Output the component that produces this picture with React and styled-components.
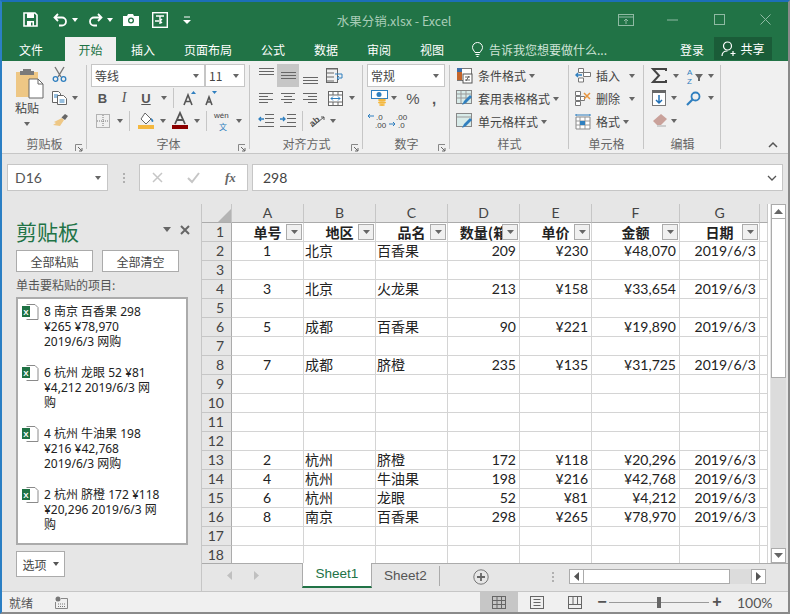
import React from "react";
import styled, { createGlobalStyle } from "styled-components";

const GlobalStyle = createGlobalStyle`
  html, body { margin: 0; padding: 0; overflow: hidden; }
  body { font-family: "Noto Sans CJK SC", "Liberation Sans", sans-serif; font-size: 12px; color: #444; }
  * { box-sizing: border-box; }
  svg { overflow: visible; }
`;

const CELL = `Lato, "Noto Sans CJK SC", sans-serif`;

const Window = styled.div`
  width: 790px; height: 614px; display: flex; flex-direction: column;
  border-top: 2px solid #1c6fb8; border-left: 2px solid #2b7fc4; border-right: 2px solid #8a8a8a; border-bottom: 2px solid #8a8a8a;
  background: #e6e6e6; overflow: hidden;
`;
const TitleBar = styled.div`
  height: 35px; background: #217346; display: flex; align-items: center; flex: none; color: #fff;
`;
const Qat = styled.div`display: flex; align-items: center; padding-left: 21px; width: 294px; flex: none;`;
const QatBtn = styled.div`width: ${p => p.$w}px; display: flex; align-items: center; gap: 4px;`;
const TitleText = styled.div`
  width: 196px; flex: none; text-align: center; color: #a9cdb8; font-size: 12.5px; padding-top: 1px;
`;
const WinControls = styled.div`
  display: flex; align-items: center; margin-left: 111px; gap: 0;
`;
const WinBtn = styled.div`width: 46.5px; display: flex; justify-content: center;`;

const TabBar = styled.div`
  height: 24px; background: #217346; display: flex; align-items: stretch; flex: none; padding-left: 17px; color: #fff; font-size: 12px;
`;
const Tab = styled.div`
  width: ${p => p.$w}px; margin-right: ${p => p.$mr || 0}px; display: flex; align-items: center; justify-content: center; padding-top: 1px;
  ${p => p.$active && `background: #f0f0f0; color: #217346;`}
`;
const TellMe = styled.div`
  display: flex; align-items: center; gap: 6px; margin-left: 28px; width: 208px; color: #cfe3d7; padding-top: 1px;
`;
const SignIn = styled.div`display: flex; align-items: center; width: 34px; flex: none; padding-top: 1px;`;
const ShareBtn = styled.div`
  width: 58px; height: 23px; background: #1a5c38; display: flex; align-items: center; justify-content: center; gap: 3px; margin-top: 0;
`;

const Ribbon = styled.div`
  height: 93px; background: #f0f0f0; display: flex; flex: none; border-bottom: 1px solid #c6c6c6; padding-top: 2px; position: relative;
`;
const Group = styled.div`
  width: ${p => p.$w}px; flex: none; display: flex; flex-direction: column; position: relative;
  ${p => !p.$last && `&::after { content: ""; position: absolute; right: 0; top: 2px; bottom: 4px; width: 1px; background: #c6c6c6; }`}
`;
const GroupBody = styled.div`
  height: 72px; flex: none; padding: ${p => p.$pad || "1px 4px 0"}; display: flex; flex-direction: ${p => p.$row ? "row" : "column"}; gap: ${p => p.$gap ?? 0}px;
`;
const GroupLabel = styled.div`
  flex: 1; display: flex; align-items: center; justify-content: center; font-size: 12px; color: #666; position: relative; padding-bottom: 5px;
`;
const Launcher = styled.svg`position: absolute; right: 4px; bottom: 5px;`;
const ToolRow = styled.div`
  height: ${p => p.$h || 22.5}px; display: flex; align-items: center; padding-left: ${p => p.$pl || 0}px;
`;
const Tool = styled.div`
  width: ${p => p.$w}px; flex: none; height: 100%; display: flex; align-items: center; justify-content: center; gap: 3px;
  ${p => p.$on && `background: #c6c6c6;`}
`;
const ToolSep = styled.div`width: 1px; height: 20px; background: #c6c6c6; flex: none; margin: 0 ${p => p.$m || 0}px;`;
const Caret = styled.span`
  display: inline-block; flex: none; width: 0; height: 0; border-left: 3.5px solid transparent; border-right: 3.5px solid transparent; border-top: 4px solid ${p => p.$c || "#666"};
`;
const BigCaret = styled(Caret)`border-left-width: 4.5px; border-right-width: 4.5px; border-top-width: 5px;`;
const PasteCaret = styled(Caret)`margin-left: 9px;`;
const SideCaret = styled(Caret)`margin-left: ${p => p.$ml || 5}px;`;
const ComboBox = styled.div`
  height: 23px; width: ${p => p.$w}px; background: #fff; border: 1px solid #c6c6c6; display: flex; align-items: center; justify-content: space-between;
  padding: 0 5px 0 3px; font-size: 12px; color: #444; margin-right: ${p => p.$mr || 0}px; flex: none;
`;
const PasteCol = styled.div`width: 47px; padding: 5px 0 0 13px; display: flex; flex-direction: column; align-items: flex-start; flex: none;`;
const PasteText = styled.div`font-size: 12px; color: #444; margin: 0 0 6px;`;
const SideCol = styled.div`display: flex; flex-direction: column; width: 30px; padding-left: 3px; flex: none;`;
const LabelTool = styled.div`
  height: 23px; display: flex; align-items: center; gap: 3px; color: #444; font-size: 12px; flex: none;
`;
const LabelSvg = styled.span`width: ${p => p.$w || 22}px; display: flex; justify-content: center; flex: none;`;
const CollapseCol = styled.div`flex: 1; display: flex; justify-content: flex-end; align-items: flex-end; padding: 0 10px 5px 0;`;

const FormulaBar = styled.div`
  height: 50px; flex: none; display: flex; align-items: flex-start; padding: 10px 5px 0 5px;
`;
const NameBox = styled.div`
  width: 101px; height: 27px; background: #fff; border: 1px solid #c6c6c6; display: flex; align-items: center; justify-content: space-between;
  padding: 0 6px 0 7px; font: 14px ${CELL}; color: #555; flex: none;
`;
const Grip = styled.div`
  width: 31px; height: 27px; flex: none; display: flex; flex-direction: column; gap: 2px; align-items: center; justify-content: center;
  & > i { width: 2px; height: 2px; background: #b0b0b0; display: block; }
`;
const FxBox = styled.div`
  width: 109px; height: 27px; background: #fff; border: 1px solid #c6c6c6; display: flex; align-items: center; flex: none; padding-left: 12px; gap: 24px;
`;
const FxText = styled.span`font: italic 600 13px "Liberation Serif", serif; color: #666; margin-left: 1px;`;
const FormulaInput = styled.div`
  flex: 1; height: 27px; background: #fff; border: 1px solid #c6c6c6; margin-left: 4px; display: flex; align-items: center; justify-content: space-between;
  padding: 0 5px 0 10px; font: 14px ${CELL}; color: #444;
`;

const Main = styled.div`flex: 1; display: flex; min-height: 0;`;
const Pane = styled.div`
  width: 199px; flex: none; padding: 9px 11px 0 14px; display: flex; flex-direction: column;
`;
const PaneHead = styled.div`height: 36px; display: flex; align-items: center; justify-content: space-between; flex: none;`;
const PaneTitle = styled.div`font-size: 21px; color: #217346; line-height: 1;`;
const PaneIcons = styled.div`display: flex; align-items: center; gap: 9px; margin: -3px 0 0;`;
const PaneBtns = styled.div`display: flex; gap: 9px; margin-top: 1px; flex: none;`;
const PaneBtn = styled.div`
  width: 77px; height: 22px; background: #fff; border: 1px solid #ababab; font-size: 12px; display: flex; align-items: center; justify-content: center; color: #444;
`;
const PaneHint = styled.div`font-size: 12px; color: #555; margin: 4px 0 3px; height: 18px; line-height: 18px; flex: none;`;
const ClipList = styled.div`
  width: 172px; height: 248px; background: #fff; border: 2px solid #ababab; padding: 4px 0 0 4px; flex: none; overflow: hidden;
`;
const ClipItem = styled.div`display: flex; gap: 5px; height: 61px;`;
const ClipIcon = styled.div`width: 17px; flex: none; padding-top: 1px;`;
const ClipText = styled.div`
  width: 117px; font: 12px/15px "Noto Sans", "Noto Sans CJK SC", sans-serif; color: #222; padding-top: 1px;
`;
const OptBtn = styled.div`
  width: 49px; height: 26px; margin-top: 6px; background: #fff; border: 1px solid #ababab; display: flex; align-items: center; justify-content: center; gap: 6px; font-size: 12px; color: #444; flex: none;
`;

const SheetArea = styled.div`flex: 1; min-width: 0; display: flex; flex-direction: column; border-left: 1px solid #c6c6c6;`;
const SheetTop = styled.div`height: 360px; display: flex; flex: none; border-bottom: 1px solid #ababab;`;
const GridWrap = styled.div`width: 568px; flex: none; overflow: hidden; background: #fff;`;
const Sheet = styled.table`
  border-collapse: separate; border-spacing: 0; table-layout: fixed; width: 566px; font: 14px ${CELL}; color: #222;
`;
const ColHead = styled.th`
  height: 18px; padding: 0; background: #e6e6e6; font-weight: 400; color: #444; font-size: 14px; line-height: 18px;
  border-right: 1px solid #c6c6c6; border-bottom: 1px solid #ababab; position: relative; overflow: hidden;
`;
const Corner = styled.svg`display: block; margin: 4px 0 0 16px;`;
const RowHead = styled.th`
  height: 19px; padding: 0 7px 0 0; background: #e6e6e6; font-weight: 400; color: #444; font-size: 14px; text-align: right; line-height: 18px;
  border-right: 1px solid #ababab; border-bottom: 1px solid #c6c6c6;
`;
const Cell = styled.td`
  height: 19px; padding: 0 ${p => p.$align === "left" ? 0 : 3}px 0 ${p => p.$align === "left" ? 1 : 2}px; text-align: ${p => p.$align || "right"}; line-height: 18px; white-space: nowrap; overflow: hidden;
  border-right: 1px solid #d4d4d4; border-bottom: 1px solid #d4d4d4; position: relative;
`;
const HeadCell = styled(Cell)`text-align: center; font-weight: 600; font-family: "Noto Sans CJK SC", sans-serif; padding: 0;`;
const FilterBtn = styled.span`
  position: absolute; right: 1px; top: 1px; width: 16px; height: 16px; background: #f0f0f0; border: 1px solid #ababab; display: flex; align-items: center; justify-content: center;
`;
const VScroll = styled.div`width: 15px; flex: none; margin-left: 1px; display: flex; flex-direction: column; background: #dcdcdc;`;
const ScrollBtn = styled.div`
  width: ${p => p.$w || 15}px; height: ${p => p.$h || 15}px; background: #fff; border: 1px solid #ababab; display: flex; align-items: center; justify-content: center; flex: none;
`;
const VThumb = styled.div`width: 15px; height: 159px; background: #fff; border: 1px solid #ababab; border-top: 0; flex: none;`;
const VTrack = styled.div`flex: 1;`;
const SheetBottom = styled.div`height: 26px; display: flex; flex: none; align-items: flex-start;`;
const TabNav = styled.div`width: 100px; height: 22px; display: flex; align-items: center; padding-left: 25px; gap: 22px; flex: none;`;
const SheetTab = styled.div`
  width: ${p => p.$w}px; height: 24px; display: flex; align-items: center; justify-content: center; font: 13.5px "Liberation Sans", sans-serif; flex: none; padding-bottom: 2px;
  color: ${p => p.$active ? "#217346" : "#555"};
  ${p => p.$active && `background: #fff; border-left: 1px solid #ababab; border-right: 1px solid #ababab; border-bottom: 2px solid #217346; margin-top: -1px; height: 25px;`}
`;
const TabSep = styled.div`width: 1px; height: 20px; margin-top: 2px; background: #ababab; flex: none;`;
const PlusWrap = styled.div`width: 97px; height: 22px; padding-left: 33px; display: flex; align-items: center; margin-top: 2px; flex: none;`;
const GripH = styled(Grip)`width: 32px; height: 20px; margin-top: 3px;`;
const HScroll = styled.div`display: flex; margin-top: 5px; width: 197px; height: 15px; flex: none; background: #dcdcdc;`;
const HThumb = styled.div`width: 146px; height: 15px; background: #fff; border: 1px solid #ababab; border-left: 0; flex: none;`;
const HTrack = styled.div`flex: 1;`;

const StatusBar = styled.div`
  height: 21px; flex: none; background: #f0f0f0; border-top: 1px solid #c6c6c6; display: flex; align-items: center; padding-left: 7px; font-size: 12px; color: #555;
`;
const StatusText = styled.div`width: 46px; flex: none;`;
const StatusSpacer = styled.div`flex: 1;`;
const ViewBtn = styled.div`
  width: 38px; height: 100%; display: flex; align-items: center; justify-content: center; flex: none;
  ${p => p.$on && `background: #c6c6c6;`}
`;
const Zoom = styled.div`display: flex; align-items: center; height: 100%; flex: none; margin-left: 2px; padding-right: 20px;`;
const ZoomSign = styled.div`font: 700 16px "Liberation Sans", sans-serif; color: #555; width: 12px; text-align: center;`;
const Slider = styled.div`
  width: 100px; height: 1px; background: #9a9a9a; margin: 0 2px 0 1px; position: relative;
  &::after { content: ""; position: absolute; left: 48px; top: -5px; width: 4px; height: 11px; background: #666; }
`;
const ZoomText = styled.div`font: 14px Lato, sans-serif; color: #555; margin-left: 14px; width: 31px; white-space: nowrap;`;

const BLUE = "#2f7fbf";

const SaveIcon = () => (
  <svg width="15" height="15" viewBox="0 0 15 15"><path d="M1 1h11l2 2v11H1z" fill="none" stroke="#fff" strokeWidth="1.6"/><rect x="4" y="1" width="7" height="5" fill="#fff"/><rect x="4" y="9" width="7" height="5" fill="#fff"/><rect x="8" y="10.5" width="1.5" height="3" fill="#217346"/></svg>
);
const UndoIcon = ({ flip }) => (
  <svg width="15" height="13" viewBox="0 0 15 13"><g transform={flip ? "translate(15 0) scale(-1 1)" : undefined}><path d="M5 1 1.5 4.5 5 8M2 4.5h7a4 4 0 0 1 0 8H6" fill="none" stroke="#fff" strokeWidth="1.8"/></g></svg>
);
const CameraIcon = () => (
  <svg width="16" height="12" viewBox="0 0 16 12"><path d="M0 2h4l1-2h5l1 2h5v10H0z" fill="#fff"/><circle cx="8" cy="6.5" r="3" fill="#217346"/><circle cx="8" cy="6.5" r="1.7" fill="#fff"/></svg>
);
const FormIcon = () => (
  <svg width="16" height="16" viewBox="0 0 16 16"><rect x=".7" y=".7" width="14.6" height="14.6" fill="none" stroke="#fff" strokeWidth="1.4"/><path d="M4 4h8M8 4v8M3 9h4M10 7l-2 2 2 2" fill="none" stroke="#fff" strokeWidth="1.4"/></svg>
);
const QatMore = () => (
  <svg width="8" height="8" viewBox="0 0 8 8"><path d="M1 1h6" stroke="#fff"/><path d="M0 4h8L4 8z" fill="#fff"/></svg>
);
const Launch = () => (
  <Launcher width="8" height="8" viewBox="0 0 8 8"><path d="M.5 7V.5H7" fill="none" stroke="#888"/><path d="M3 3l4 4M7 4v3H4" fill="none" stroke="#666"/></Launcher>
);
const PasteIcon = () => (
  <svg width="29" height="31" viewBox="0 0 29 31"><path d="M1 4h22v25H1z" fill="#eec785"/><path d="M8 1h8v2h3v4H5V3h3z" fill="#7a7a7a"/><path d="M14 11h9l5 5v14H14z" fill="#fff" stroke="#666"/><path d="M23 11v5h5" fill="none" stroke="#666"/></svg>
);
const CutIcon = () => (
  <svg width="15" height="15" viewBox="0 0 15 15"><path d="M3 0l6 10M12 0L6 10" stroke="#777" strokeWidth="1.4"/><circle cx="3.5" cy="12" r="2.3" fill="none" stroke={BLUE} strokeWidth="1.3"/><circle cx="11.5" cy="12" r="2.3" fill="none" stroke={BLUE} strokeWidth="1.3"/></svg>
);
const CopyIcon = () => (
  <svg width="15" height="14" viewBox="0 0 15 14"><path d="M.5.5h6l2 2v9H.5z" fill="#fff" stroke="#666"/><path d="M5.5 4.5h6l3 3v6h-9z" fill="#fff" stroke="#666"/><path d="M2 4h4M2 6h3M7.5 9h5M7.5 11h5" stroke="#2f7fbf"/></svg>
);
const BrushIcon = () => (
  <svg width="16" height="14" viewBox="0 0 16 14"><path d="M10 4l2 2-4 6-7-1 3-2-2-1z" fill="#eec785"/><path d="M9.5 3.5 13 0l3 2-3 4z" fill="#666"/></svg>
);
const Letter = styled.span`
  font: ${p => p.$st || "normal"} ${p => p.$wt || 700} ${p => p.$fs || 13}px ${p => p.$ff || `"Liberation Sans", sans-serif`}; color: ${p => p.$c || "#555"};
  ${p => p.$u && `text-decoration: underline;`}
`;
const GrowFont = ({ up }) => (
  <svg width="14" height="15" viewBox="0 0 14 15"><path d={up ? "M1 14 5 4l4 10M2.5 10.5h5" : "M1 14l3-8 3 8M2 11h4"} fill="none" stroke="#555" strokeWidth="1.6"/><path d={up ? "M8 3 10.5 0 13 3z" : "M7 0h5L9.5 3z"} fill={BLUE}/></svg>
);
const BorderIcon = () => (
  <svg width="14" height="14" viewBox="0 0 14 14"><rect x=".5" y=".5" width="13" height="13" fill="none" stroke="#777" strokeDasharray="1 1"/><path d="M7 1v12M1 7h12" stroke="#777" strokeDasharray="1 1"/></svg>
);
const FillIcon = () => (
  <svg width="17" height="17" viewBox="0 0 17 17"><path d="M7 1l6 6-5 5-5-5z" fill="#fff" stroke="#666"/><path d="M13 6c2 1 3 3 2 4-2 0-2-2-2-4z" fill={BLUE}/><rect x="0" y="13" width="16" height="4" fill="#f4b83f"/></svg>
);
const FontColorIcon = () => (
  <svg width="16" height="17" viewBox="0 0 16 17"><path d="M3 12 8 1l5 11M5 8h6" fill="none" stroke="#555" strokeWidth="1.8"/><rect y="13" width="16" height="4" fill="#8c0000"/></svg>
);
const PhoneticIcon = () => (
  <svg width="18" height="18" viewBox="0 0 18 18"><text x="0" y="6" fontFamily="Liberation Sans" fontSize="8" fill="#444">wén</text><text x="5" y="18" fontFamily="Noto Sans CJK SC" fontSize="8" fill={BLUE}>文</text></svg>
);
const Lines = ({ rows }) => (
  <svg width="14" height="12" viewBox="0 0 14 12">{rows.map((r, i) => <path key={i} d={`M${r[0]} ${r[2]}.5H${r[1]}`} stroke="#666"/>)}</svg>
);
const AlignV = ({ pos }) => (
  <svg width="15" height="20" viewBox="0 0 15 20">{[0, 3, 6].map(o => <path key={o} d={`M0 ${pos + o}.5H15`} stroke="#666"/>)}</svg>
);
const WrapIcon = () => (
  <svg width="18" height="16" viewBox="0 0 18 16"><path d="M.5 1H12M.5 5H8M.5 9H8M.5 13H8" stroke="#666"/><rect x=".5" y=".5" width="11" height="14" fill="none" stroke="#666"/><path d="M9 6h7v4H11M13 8l-2 2 2 2" fill="none" stroke={BLUE}/></svg>
);
const MergeIcon = () => (
  <svg width="15" height="15" viewBox="0 0 15 15"><rect x=".5" y=".5" width="14" height="14" fill="#fff" stroke="#666"/><path d="M1 4h13M1 11h13M5 1v3M10 1v3M5 11v3M10 11v3" stroke="#666"/><path d="M3 7.5h9M3 7.5l2-2M3 7.5l2 2M12 7.5l-2-2M12 7.5l-2 2" stroke={BLUE} fill="none"/></svg>
);
const IndentIcon = ({ right }) => (
  <svg width="16" height="13" viewBox="0 0 16 13"><path d="M7 .5h9M7 4.5h9M7 8.5h9M0 12.5h16" stroke="#666"/><path d={right ? "M0 5h5M3 3l2 2-2 2" : "M6 5H1M3 3 1 5l2 2"} fill="none" stroke={BLUE} strokeWidth="1.3"/></svg>
);
const OrientIcon = () => (
  <svg width="17" height="15" viewBox="0 0 17 15"><text x="0" y="11" transform="rotate(-40 6 8)" fontFamily="Liberation Sans" fontSize="9" fontWeight="700" fill="#555">ab</text><path d="M3 14 15 4M15 4h-3M15 4v3" fill="none" stroke="#555"/></svg>
);
const MoneyIcon = () => (
  <svg width="17" height="16" viewBox="0 0 17 16"><rect x=".5" y=".5" width="16" height="8" fill="#fff" stroke={BLUE}/><circle cx="8" cy="4.5" r="2.5" fill={BLUE}/><ellipse cx="11" cy="10" rx="4" ry="1.3" fill="#f4b83f"/><ellipse cx="11" cy="12.5" rx="4" ry="1.3" fill="#f4b83f"/><ellipse cx="11" cy="15" rx="3" ry="1" fill="#f4b83f"/></svg>
);
const DecIcon = ({ more }) => (
  <svg width="20" height="15" viewBox="0 0 20 15">
    <path d={more ? "M0 11h6M4 9l2 2-2 2" : "M0 3h6M2 1 0 3l2 2"} fill="none" stroke={BLUE}/>
    <text x={more ? 7 : 8} y="6.5" fontFamily="Liberation Sans" fontSize="8" fill="#444">{more ? ".00" : ".0"}</text>
    <text x={more ? 9 : 7} y="15" fontFamily="Liberation Sans" fontSize="8" fill="#444">{more ? ".0" : ".00"}</text>
  </svg>
);
const CondIcon = () => (
  <svg width="15" height="16" viewBox="0 0 15 16"><rect x=".5" y=".5" width="14" height="12" fill="#fff" stroke="#777"/><rect x="0" y="0" width="5" height="4" fill="#3e6ea8"/><rect x="0" y="4" width="5" height="4" fill="#c4652b"/><rect x="0" y="8" width="5" height="4" fill="#c4652b"/><rect x="6" y="6" width="9" height="9" fill="#fff" stroke="#555"/><path d="M8 9h5M8 12h5M9 13l3-5" stroke="#444" strokeWidth=".8"/></svg>
);
const TableStyleIcon = () => (
  <svg width="17" height="17" viewBox="0 0 17 17"><rect x=".5" y=".5" width="15" height="13" fill="#d8ebe9" stroke="#888"/><path d="M1 4h14M1 8h14M5 1v12M10 1v12" stroke="#999"/><path d="M6 15l2-4 6-6 2 2-6 6z" fill={BLUE}/></svg>
);
const CellStyleIcon = () => (
  <svg width="17" height="17" viewBox="0 0 17 17"><rect x=".5" y=".5" width="15" height="13" fill="#d8ebe9" stroke="#888"/><path d="M1 4h14" stroke="#999"/><path d="M6 15l2-4 6-6 2 2-6 6z" fill={BLUE}/></svg>
);
const InsertIcon = () => (
  <svg width="16" height="15" viewBox="0 0 16 15"><path d="M3.5.5h5v4h-5zM8.5 4.5h7v4h-7zM3.5 10h5v4h-5z" fill="#fff" stroke="#777"/><path d="M7 7H1M3 5 1 7l2 2" fill="none" stroke={BLUE} strokeWidth="1.4"/></svg>
);
const DeleteIcon = () => (
  <svg width="16" height="15" viewBox="0 0 16 15"><path d="M.5.5h5v4h-5zM.5 5.5h5v4h-5zM.5 10.5h5v4h-5zM5.5 5.5h4v4h-4z" fill="#fff" stroke="#777"/><path d="M9 2l6 6M15 2 9 8" stroke="#e8953e" strokeWidth="1.5"/></svg>
);
const FormatIcon = () => (
  <svg width="16" height="16" viewBox="0 0 16 16"><path d="M1 3h14v12H1z" fill="#fff" stroke="#888"/><path d="M1 7h14M1 11h14M5 3v12M10 3v12" stroke="#999"/><rect x="5" y="7" width="5" height="4" fill={BLUE}/><path d="M1 1h14M1 0v2M15 0v2" stroke={BLUE}/></svg>
);
const SumIcon = () => (
  <svg width="15" height="15" viewBox="0 0 15 15"><path d="M14 3V1H1l6 6.5L1 14h13v-2" fill="none" stroke="#444" strokeWidth="2"/></svg>
);
const SortIcon = () => (
  <svg width="16" height="16" viewBox="0 0 16 16"><text x="0" y="7" fontFamily="Liberation Sans" fontSize="8" fill={BLUE}>A</text><text x="0" y="16" fontFamily="Liberation Sans" fontSize="8" fill={BLUE}>Z</text><path d="M8 6h8l-3 4v3h-2v-3z" fill="#666"/></svg>
);
const FillDownIcon = () => (
  <svg width="14" height="16" viewBox="0 0 14 16"><rect x=".5" y=".5" width="13" height="15" fill="#fff" stroke="#777"/><rect width="14" height="3" fill="#666"/><path d="M7 5v8M4 10l3 3 3-3" fill="none" stroke="#1f6fb5" strokeWidth="1.5"/></svg>
);
const FindIcon = () => (
  <svg width="15" height="15" viewBox="0 0 15 15"><circle cx="9.5" cy="5.5" r="4" fill="none" stroke={BLUE} strokeWidth="1.8"/><path d="M6.5 8.5 1 14" stroke={BLUE} strokeWidth="2.2"/></svg>
);
const EraserIcon = () => (
  <svg width="15" height="14" viewBox="0 0 15 14"><path d="M9 0l6 5-6 6H5L1 7z" fill="#c9a19a"/><path d="M5 12h9" stroke="#aaa"/></svg>
);
const XlIcon = () => (
  <svg width="17" height="16" viewBox="0 0 17 16"><path d="M4.5.5H13l3 3v12H4.5" fill="#fff" stroke="#8a8a8a"/><rect x="0" y="2" width="8" height="11" fill="#1f7244"/><text x="1.2" y="10.5" fontFamily="Liberation Sans" fontWeight="700" fontSize="8" fill="#fff">X</text></svg>
);
const ArrowLeft = ({ c = "#555" }) => <svg width="5" height="9" viewBox="0 0 5 9"><path d="M5 0v9L0 4.5z" fill={c}/></svg>;
const ArrowRight = ({ c = "#555" }) => <svg width="5" height="9" viewBox="0 0 5 9"><path d="M0 0v9l5-4.5z" fill={c}/></svg>;
const ArrowUp = () => <svg width="9" height="5" viewBox="0 0 9 5"><path d="M0 5h9L4.5 0z" fill="#666"/></svg>;

const COLS = [72, 72, 72, 72, 72, 88, 80, 8];
const LETTERS = ["A", "B", "C", "D", "E", "F", "G", ""];
const HEADERS = ["单号", "地区", "品名", "数量(箱", "单价", "金额", "日期"];
const DATA = {
  2: [1, "北京", "百香果", 209, "¥230", "¥48,070"],
  4: [3, "北京", "火龙果", 213, "¥158", "¥33,654"],
  6: [5, "成都", "百香果", 90, "¥221", "¥19,890"],
  8: [7, "成都", "脐橙", 235, "¥135", "¥31,725"],
  13: [2, "杭州", "脐橙", 172, "¥118", "¥20,296"],
  14: [4, "杭州", "牛油果", 198, "¥216", "¥42,768"],
  15: [6, "杭州", "龙眼", 52, "¥81", "¥4,212"],
  16: [8, "南京", "百香果", 298, "¥265", "¥78,970"],
};
const CLIPS = [
  "8 南京 百香果 298 ¥265 ¥78,970 2019/6/3 网购",
  "6 杭州 龙眼 52 ¥81 ¥4,212 2019/6/3 网购",
  "4 杭州 牛油果 198 ¥216 ¥42,768 2019/6/3 网购",
  "2 杭州 脐橙 172 ¥118 ¥20,296 2019/6/3 网购",
];
const ROWS = Array.from({ length: 17 }, (_, i) => i + 2);

const DataRow = ({ n }) => {
  const d = DATA[n];
  return (
    <tr>
      <RowHead>{n}</RowHead>
      {d ? (
        <>
          <Cell $align="center">{d[0]}</Cell>
          <Cell $align="left">{d[1]}</Cell>
          <Cell $align="left">{d[2]}</Cell>
          <Cell>{d[3]}</Cell>
          <Cell>{d[4]}</Cell>
          <Cell>{d[5]}</Cell>
          <Cell>2019/6/3</Cell>
          <Cell />
        </>
      ) : COLS.map((_, i) => <Cell key={i} />)}
    </tr>
  );
};

export default function App() {
  return (
    <Window>
      <GlobalStyle />
      <TitleBar>
        <Qat>
          <QatBtn $w={30}><SaveIcon /></QatBtn>
          <QatBtn $w={35}><UndoIcon /><Caret $c="#fff" /></QatBtn>
          <QatBtn $w={35}><UndoIcon flip /><Caret $c="#fff" /></QatBtn>
          <QatBtn $w={29}><CameraIcon /></QatBtn>
          <QatBtn $w={31}><FormIcon /></QatBtn>
          <QatBtn $w={12}><QatMore /></QatBtn>
        </Qat>
        <TitleText>水果分销.xlsx - Excel</TitleText>
        <WinControls>
          <WinBtn><svg width="16" height="12" viewBox="0 0 16 12"><rect x=".5" y=".5" width="15" height="11" fill="none" stroke="#8fbaa3"/><path d="M1 3h14M8 10V5M6 7l2-2 2 2" fill="none" stroke="#8fbaa3"/></svg></WinBtn>
          <WinBtn><svg width="11" height="2" viewBox="0 0 11 2"><path d="M0 1h11" stroke="#8fbaa3"/></svg></WinBtn>
          <WinBtn><svg width="11" height="11" viewBox="0 0 11 11"><rect x=".5" y=".5" width="10" height="10" fill="none" stroke="#8fbaa3"/></svg></WinBtn>
          <WinBtn><svg width="11" height="11" viewBox="0 0 11 11"><path d="M.5.5l10 10M10.5.5l-10 10" stroke="#8fbaa3"/></svg></WinBtn>
        </WinControls>
      </TitleBar>
      <TabBar>
        <Tab $w={24} $mr={22}>文件</Tab>
        <Tab $w={51} $mr={15} $active>开始</Tab>
        <Tab $w={24} $mr={29}>插入</Tab>
        <Tab $w={48} $mr={29}>页面布局</Tab>
        <Tab $w={24} $mr={29}>公式</Tab>
        <Tab $w={24} $mr={29}>数据</Tab>
        <Tab $w={24} $mr={29}>审阅</Tab>
        <Tab $w={24}>视图</Tab>
        <TellMe>
          <svg width="11" height="15" viewBox="0 0 11 15"><path d="M3 10.5C2 8.5.5 7.5.5 5.5a5 5 0 0 1 10 0c0 2-1.5 3-2.500 5zM3.500 12.500h4M4.500 14.500h2" fill="none" stroke="#fff"/></svg>
          告诉我您想要做什么...
        </TellMe>
        <SignIn>登录</SignIn>
        <ShareBtn>
          <svg width="16" height="16" viewBox="0 0 16 16"><circle cx="6.5" cy="5" r="4" fill="none" stroke="#fff" strokeWidth="1.2"/><path d="M1 15c0-3 2-5 5.5-5M12 10v5M9.5 12.5h5" fill="none" stroke="#fff" strokeWidth="1.2"/></svg>
          共享
        </ShareBtn>
      </TabBar>
      <Ribbon>
        <Group $w={85}>
          <GroupBody $row $pad="0">
            <PasteCol>
              <PasteIcon />
              <PasteText>粘贴</PasteText>
              <PasteCaret />
            </PasteCol>
            <SideCol>
              <ToolRow $h={23}><CutIcon /></ToolRow>
              <ToolRow $h={23}><CopyIcon /><SideCaret /></ToolRow>
              <ToolRow $h={23}><BrushIcon /></ToolRow>
            </SideCol>
          </GroupBody>
          <GroupLabel>剪贴板<Launch /></GroupLabel>
        </Group>
        <Group $w={163}>
          <GroupBody>
            <ToolRow $h={23}>
              <ComboBox $w={114}>等线<Caret /></ComboBox>
              <ComboBox $w={40}>11<Caret /></ComboBox>
            </ToolRow>
            <ToolRow $pl={1}>
              <Tool $w={21}><Letter>B</Letter></Tool>
              <Tool $w={22}><Letter $st="italic" $wt={400} $ff={`"Liberation Serif", serif`} $fs={14}>I</Letter></Tool>
              <Tool $w={22}><Letter $u>U</Letter></Tool>
              <Tool $w={14}><Caret /></Tool>
              <ToolSep $m={2} />
              <Tool $w={28}><GrowFont up /></Tool>
              <Tool $w={16}><GrowFont /></Tool>
            </ToolRow>
            <ToolRow $pl={1}>
              <Tool $w={21}><BorderIcon /></Tool>
              <Tool $w={14}><Caret /></Tool>
              <ToolSep $m={2} />
              <Tool $w={28}><FillIcon /></Tool>
              <Tool $w={6}><Caret /></Tool>
              <Tool $w={28}><FontColorIcon /></Tool>
              <Tool $w={6}><Caret /></Tool>
              <ToolSep $m={6} />
              <Tool $w={20}><PhoneticIcon /></Tool>
              <Tool $w={12}><Caret /></Tool>
            </ToolRow>
          </GroupBody>
          <GroupLabel>字体<Launch /></GroupLabel>
        </Group>
        <Group $w={113}>
          <GroupBody $pad="1px 4px 0 5px">
            <ToolRow $h={23}>
              <Tool $w={22}><AlignV pos={2} /></Tool>
              <Tool $w={22} $on><AlignV pos={6} /></Tool>
              <Tool $w={22}><AlignV pos={11} /></Tool>
              <Tool $w={28}><WrapIcon /></Tool>
            </ToolRow>
            <ToolRow>
              <Tool $w={22}><Lines rows={[[0, 14, 1], [0, 9, 4], [0, 14, 7], [0, 9, 10]]} /></Tool>
              <Tool $w={22}><Lines rows={[[0, 14, 1], [3, 11, 4], [0, 14, 7], [3, 11, 10]]} /></Tool>
              <Tool $w={22}><Lines rows={[[0, 14, 1], [5, 14, 4], [0, 14, 7], [5, 14, 10]]} /></Tool>
              <Tool $w={28}><MergeIcon /></Tool>
              <Tool $w={5}><Caret /></Tool>
            </ToolRow>
            <ToolRow>
              <Tool $w={22}><IndentIcon /></Tool>
              <Tool $w={22}><IndentIcon right /></Tool>
              <ToolSep $m={3} />
              <Tool $w={22}><OrientIcon /></Tool>
              <Tool $w={10}><Caret /></Tool>
            </ToolRow>
          </GroupBody>
          <GroupLabel>对齐方式<Launch /></GroupLabel>
        </Group>
        <Group $w={87}>
          <GroupBody>
            <ToolRow $h={23}><ComboBox $w={78}>常规<Caret /></ComboBox></ToolRow>
            <ToolRow>
              <Tool $w={24}><MoneyIcon /></Tool>
              <Tool $w={6}><Caret /></Tool>
              <Tool $w={32}><Letter $wt={400} $fs={15}>%</Letter></Tool>
              <Tool $w={10}><Letter $fs={15}>,</Letter></Tool>
            </ToolRow>
            <ToolRow>
              <Tool $w={22}><DecIcon /></Tool>
              <Tool $w={20}><DecIcon more /></Tool>
            </ToolRow>
          </GroupBody>
          <GroupLabel>数字<Launch /></GroupLabel>
        </Group>
        <Group $w={119}>
          <GroupBody $pad="1px 0 0 3px">
            <LabelTool><LabelSvg><CondIcon /></LabelSvg>条件格式<Caret /></LabelTool>
            <LabelTool><LabelSvg><TableStyleIcon /></LabelSvg>套用表格格式<Caret /></LabelTool>
            <LabelTool><LabelSvg><CellStyleIcon /></LabelSvg>单元格样式<Caret /></LabelTool>
          </GroupBody>
          <GroupLabel>样式</GroupLabel>
        </Group>
        <Group $w={75}>
          <GroupBody $pad="1px 0 0 4px">
            <LabelTool><LabelSvg $w={20}><InsertIcon /></LabelSvg>插入<SideCaret $ml={6} /></LabelTool>
            <LabelTool><LabelSvg $w={20}><DeleteIcon /></LabelSvg>删除<SideCaret $ml={6} /></LabelTool>
            <LabelTool><LabelSvg $w={20}><FormatIcon /></LabelSvg>格式<Caret /></LabelTool>
          </GroupBody>
          <GroupLabel>单元格</GroupLabel>
        </Group>
        <Group $w={77}>
          <GroupBody $pad="1px 0 0 6px">
            <ToolRow $h={23}>
              <Tool $w={18}><SumIcon /></Tool>
              <Tool $w={16}><Caret /></Tool>
              <Tool $w={22}><SortIcon /></Tool>
              <Tool $w={10}><Caret /></Tool>
            </ToolRow>
            <ToolRow>
              <Tool $w={18}><FillDownIcon /></Tool>
              <Tool $w={12}><Caret /></Tool>
              <Tool $w={26}><FindIcon /></Tool>
              <Tool $w={10}><Caret /></Tool>
            </ToolRow>
            <ToolRow>
              <Tool $w={18}><EraserIcon /></Tool>
              <Tool $w={12}><Caret /></Tool>
            </ToolRow>
          </GroupBody>
          <GroupLabel>编辑</GroupLabel>
        </Group>
        <CollapseCol>
          <svg width="10" height="6" viewBox="0 0 10 6"><path d="M1 5l4-4 4 4" fill="none" stroke="#555" strokeWidth="1.5"/></svg>
        </CollapseCol>
      </Ribbon>
      <FormulaBar>
        <NameBox>D16<Caret /></NameBox>
        <Grip><i /><i /><i /></Grip>
        <FxBox>
          <svg width="11" height="11" viewBox="0 0 11 11"><path d="M1 1l9 9M10 1l-9 9" stroke="#c6c6c6" strokeWidth="1.5"/></svg>
          <svg width="13" height="11" viewBox="0 0 13 11"><path d="M1 6l4 4 7-9" fill="none" stroke="#c6c6c6" strokeWidth="2"/></svg>
          <FxText>fx</FxText>
        </FxBox>
        <FormulaInput>298<svg width="10" height="6" viewBox="0 0 10 6"><path d="M1 1l4 4 4-4" fill="none" stroke="#555" strokeWidth="1.3"/></svg></FormulaInput>
      </FormulaBar>
      <Main>
        <Pane>
          <PaneHead>
            <PaneTitle>剪贴板</PaneTitle>
            <PaneIcons>
              <BigCaret />
              <svg width="10" height="10" viewBox="0 0 10 10"><path d="M1 1l8 8M9 1 1 9" stroke="#666" strokeWidth="2"/></svg>
            </PaneIcons>
          </PaneHead>
          <PaneBtns>
            <PaneBtn>全部粘贴</PaneBtn>
            <PaneBtn>全部清空</PaneBtn>
          </PaneBtns>
          <PaneHint>单击要粘贴的项目:</PaneHint>
          <ClipList>
            {CLIPS.map(t => (
              <ClipItem key={t}>
                <ClipIcon><XlIcon /></ClipIcon>
                <ClipText>{t}</ClipText>
              </ClipItem>
            ))}
          </ClipList>
          <OptBtn>选项<Caret $c="#555" /></OptBtn>
        </Pane>
        <SheetArea>
          <SheetTop>
            <GridWrap>
              <Sheet>
                <colgroup>
                  <col style={{ width: 30 }} />
                  {COLS.map((w, i) => <col key={i} style={{ width: w }} />)}
                </colgroup>
                <thead>
                  <tr>
                    <ColHead>
                      <Corner width="13" height="13" viewBox="0 0 13 13"><path d="M13 0v13H0z" fill="#b4b4b4"/></Corner>
                    </ColHead>
                    {LETTERS.map((l, i) => <ColHead key={i}>{l}</ColHead>)}
                  </tr>
                </thead>
                <tbody>
                  <tr>
                    <RowHead>1</RowHead>
                    {HEADERS.map(h => (
                      <HeadCell key={h}>
                        {h}
                        <FilterBtn><svg width="7" height="4" viewBox="0 0 7 4"><path d="M0 0h7L3.5 4z" fill="#666"/></svg></FilterBtn>
                      </HeadCell>
                    ))}
                    <Cell />
                  </tr>
                  {ROWS.map(n => <DataRow key={n} n={n} />)}
                </tbody>
              </Sheet>
            </GridWrap>
            <VScroll>
              <ScrollBtn><ArrowUp /></ScrollBtn>
              <VThumb />
              <VTrack />
              <ScrollBtn><svg width="9" height="5" viewBox="0 0 9 5"><path d="M0 0h9L4.5 5z" fill="#666"/></svg></ScrollBtn>
            </VScroll>
          </SheetTop>
          <SheetBottom>
            <TabNav><ArrowLeft c="#c0c0c0" /><ArrowRight c="#c0c0c0" /></TabNav>
            <SheetTab $w={70} $active>Sheet1</SheetTab>
            <SheetTab $w={67}>Sheet2</SheetTab>
            <TabSep />
            <PlusWrap>
              <svg width="16" height="16" viewBox="0 0 16 16"><circle cx="8" cy="8" r="7.2" fill="none" stroke="#777"/><path d="M8 4v8M4 8h8" stroke="#666" strokeWidth="1.8"/></svg>
            </PlusWrap>
            <GripH><i /><i /><i /></GripH>
            <HScroll>
              <ScrollBtn><ArrowLeft /></ScrollBtn>
              <HThumb />
              <HTrack />
              <ScrollBtn><ArrowRight /></ScrollBtn>
            </HScroll>
          </SheetBottom>
        </SheetArea>
      </Main>
      <StatusBar>
        <StatusText>就绪</StatusText>
        <svg width="13" height="13" viewBox="0 0 13 13"><circle cx="3" cy="3" r="2.5" fill="#777"/><path d="M6 2.5h6.5V12.5H.5V6" fill="none" stroke="#888"/><path d="M3 8h8M3 10.5h8" stroke="#777" strokeDasharray="1 1"/></svg>
        <StatusSpacer />
        <ViewBtn $on><svg width="14" height="13" viewBox="0 0 14 13"><rect x=".5" y=".5" width="13" height="12" fill="none" stroke="#666"/><path d="M.5 4.5h13M.5 8.5h13M5 1v12M9.5 1v12" stroke="#666"/></svg></ViewBtn>
        <ViewBtn><svg width="14" height="13" viewBox="0 0 14 13"><rect x=".5" y=".5" width="13" height="12" fill="none" stroke="#666"/><path d="M3.5 3.5h7M3.5 6.5h7M3.500 9.500h7" stroke="#666"/></svg></ViewBtn>
        <ViewBtn><svg width="14" height="13" viewBox="0 0 14 13"><rect x=".5" y=".5" width="13" height="12" fill="none" stroke="#666"/><path d="M.5 8.5h13M5 .5v8M9.5 .5v8" stroke="#666"/></svg></ViewBtn>
        <Zoom>
          <ZoomSign>−</ZoomSign>
          <Slider />
          <ZoomSign>+</ZoomSign>
          <ZoomText>100%</ZoomText>
        </Zoom>
      </StatusBar>
    </Window>
  );
}
